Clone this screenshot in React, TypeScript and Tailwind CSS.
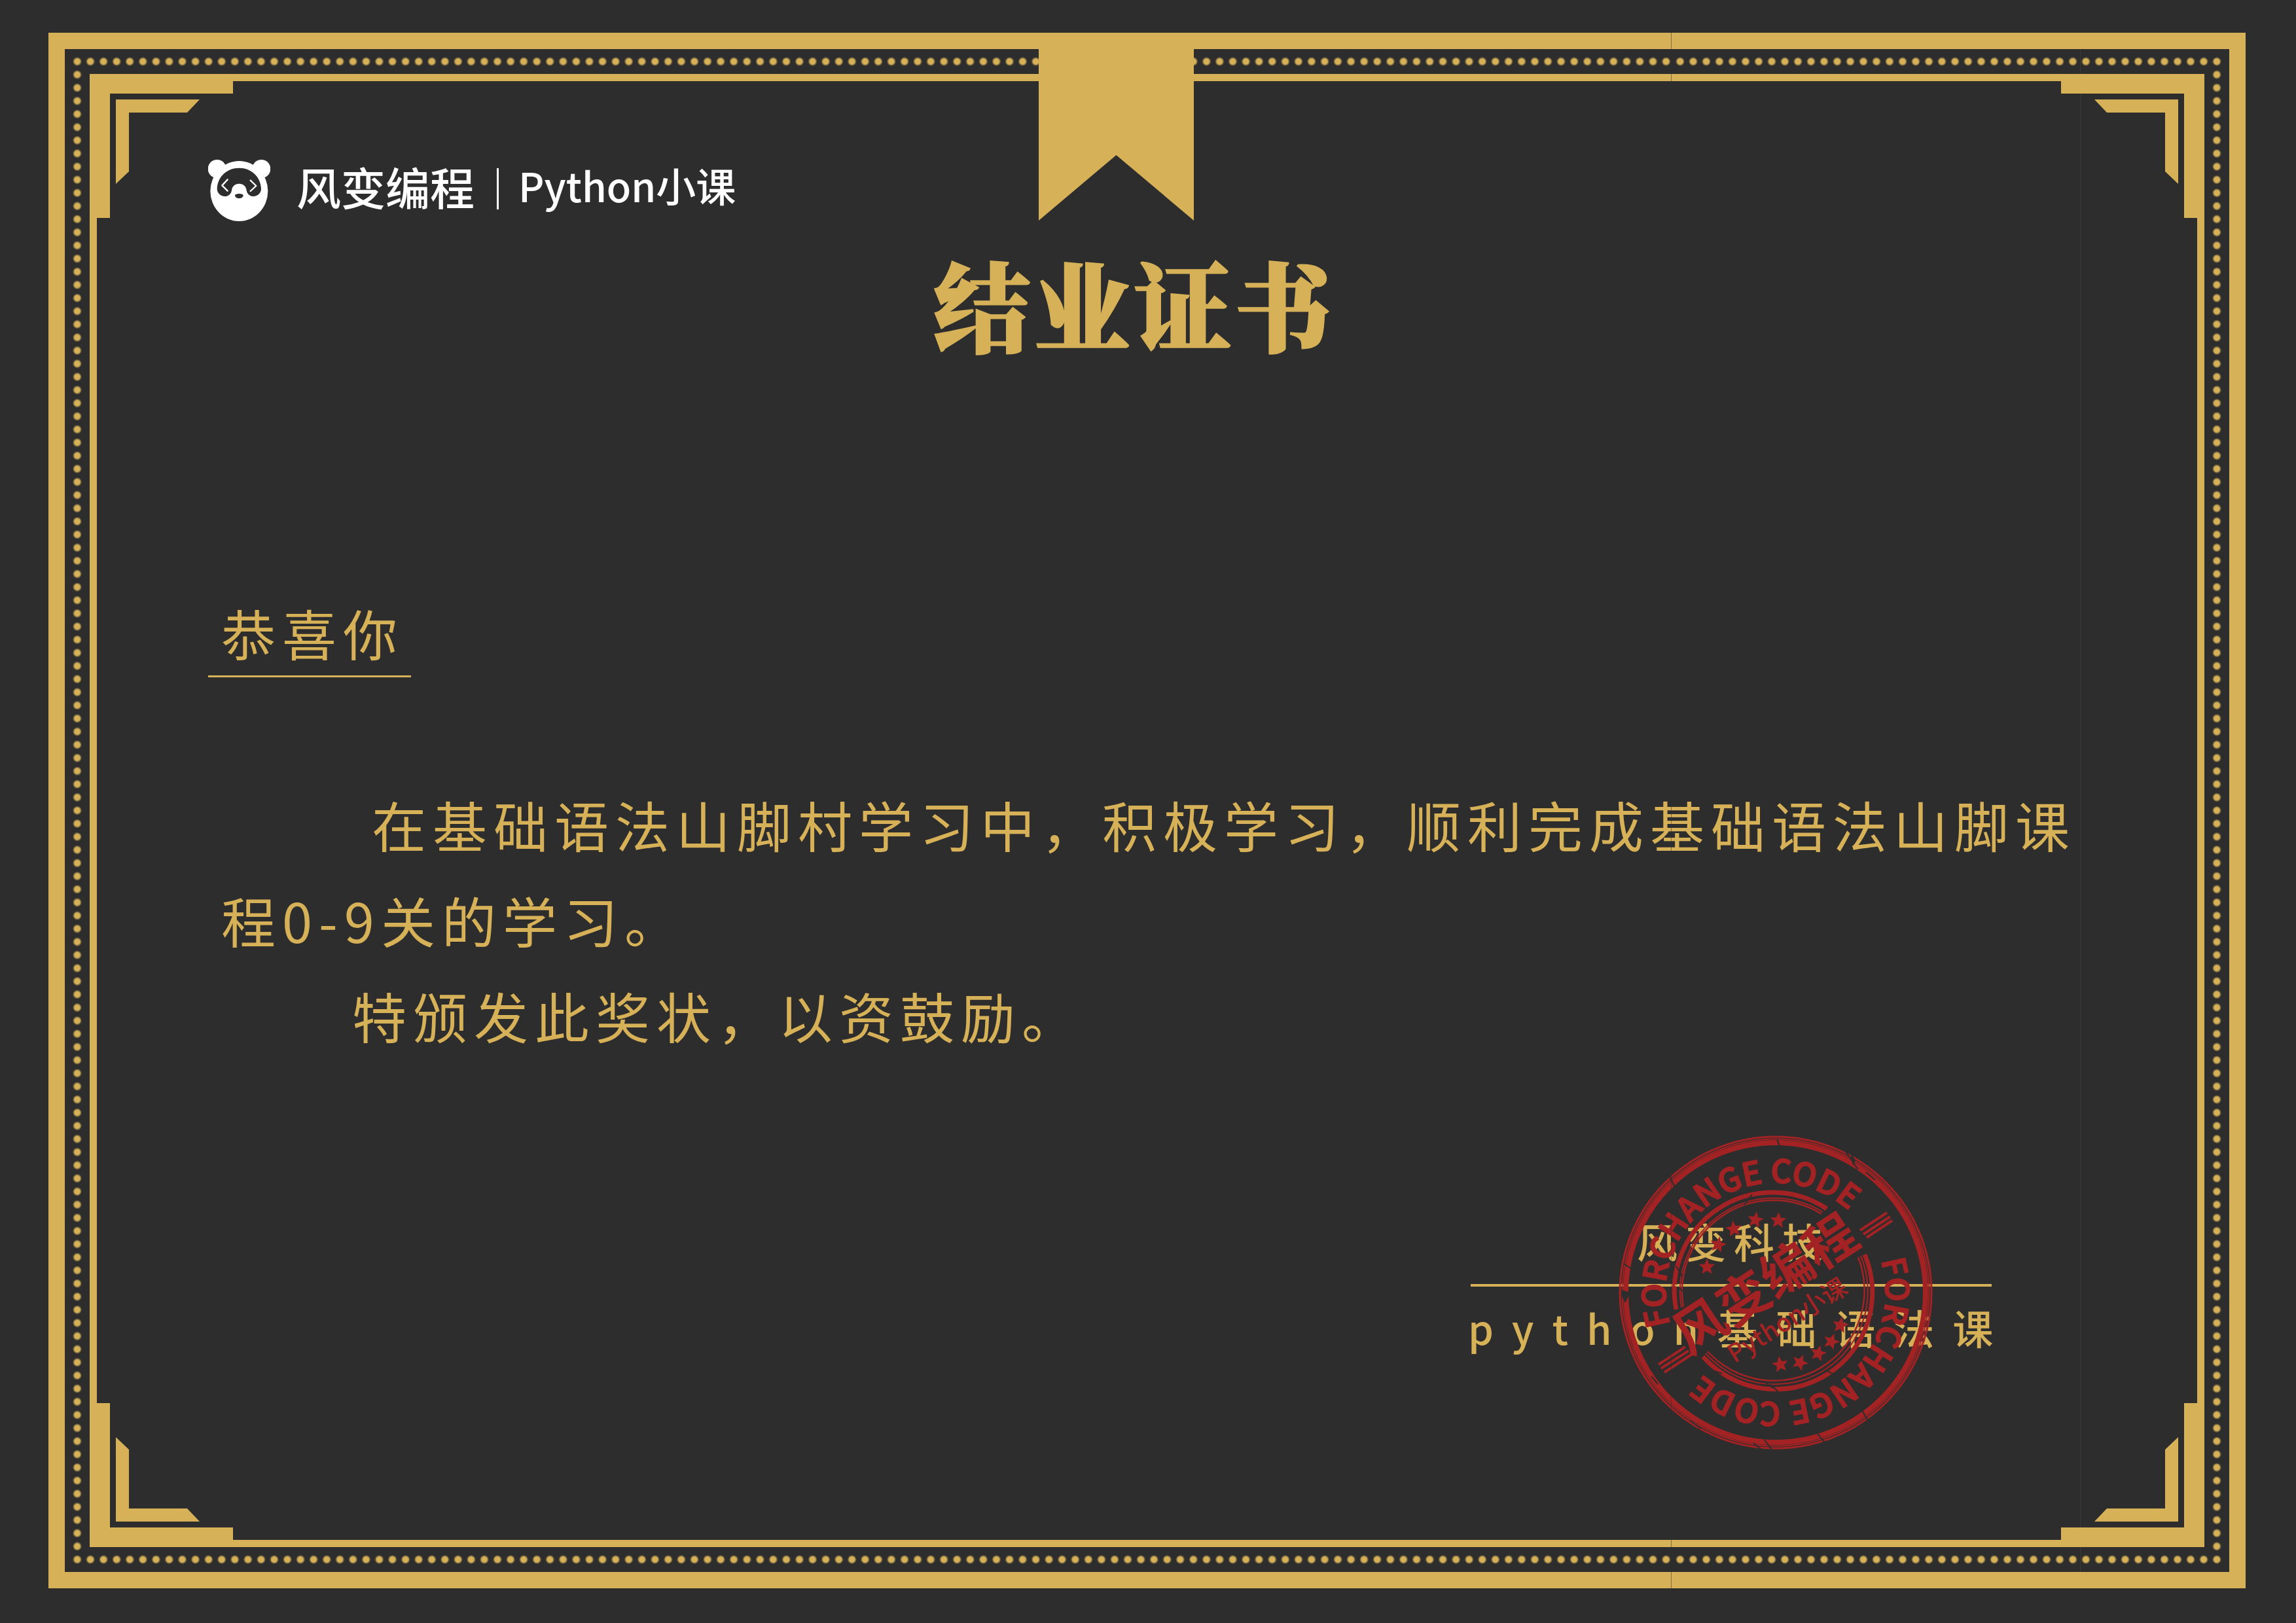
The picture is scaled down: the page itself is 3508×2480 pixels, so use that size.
import React from "react";

const GOLD = "#d6b158";
const RED = "#a32224";

function DotRow() {
  return (
    <div className="mx-[9px] grid grid-cols-[2448fr_840fr]">
      <div className="bg-[radial-gradient(circle,#d6b158_0_4px,transparent_7px)] bg-size-[20px_38px] [background-repeat:round_no-repeat]" />
      <div className="bg-[radial-gradient(circle,#d6b158_0_4px,transparent_7px)] bg-size-[20px_38px] [background-repeat:round_no-repeat]" />
    </div>
  );
}

function DotColumn() {
  return (
    <div className="-my-[9px] bg-[radial-gradient(circle,#d6b158_0_4px,transparent_7px)] bg-size-[38px_20px] [background-repeat:no-repeat_round]" />
  );
}

function Corner({ className }: { className: string }) {
  return (
    <svg viewBox="0 0 220 220" className={`absolute size-[220px] ${className}`} fill={GOLD} aria-hidden="true">
      <path d="M0 0H219V30H31V220H0Z" />
      <path d="M40 39H168L149 59H60V149L40 168Z" />
    </svg>
  );
}

function Panda() {
  return (
    <svg viewBox="54 72 285 282" className="h-[94px] w-[95px]" aria-hidden="true">
      <g fill="#fff">
        <circle cx="95" cy="114" r="42" />
        <circle cx="298" cy="114" r="42" />
        <ellipse cx="196" cy="216" rx="132" ry="138" />
      </g>
      <path
        fill="#2d2d2d"
        d="M95 205C97 150 140 110 196 110C252 110 295 150 297 205A35 35 0 0 1 262 240C245 240 232 228 230 212C228 193 214 182 196 182C178 182 164 193 162 212C160 228 147 240 130 240A35 35 0 0 1 95 205Z"
      />
      <path fill="#2d2d2d" d="M177 236C177 225 215 225 215 236C214 244 206 249 196 249C186 249 178 244 177 236Z" />
      <path
        d="M143 163L118 190L143 215M248 167L274 192L248 216"
        fill="none"
        stroke="#fff"
        strokeWidth="7"
        strokeLinecap="round"
        strokeLinejoin="round"
      />
    </svg>
  );
}

const STARS: [number, number, number][] = [
  [244, 130, 4],
  [209, 129, 10],
  [176, 143, -8],
  [152, 167, 12],
  [135, 201, 0],
  [247, 350, -10],
  [277, 347, 24],
  [305, 333, 14],
  [325, 315, 20],
  [339, 290, 10],
];

function Stamp() {
  return (
    <svg
      viewBox="0 0 480 480"
      className="pointer-events-none absolute -top-[95px] left-[226px] size-[480px]"
      role="img"
      aria-label="FORCHANGE CODE 风变编程 Python小课"
    >
      <defs>
        <path id="stamp-arc" d="M79.300 289.100A168 168 0 1 1 400.700 289.100" />
        <mask id="stamp-cracks" maskUnits="userSpaceOnUse" x="0" y="0" width="480" height="480">
          <rect width="480" height="480" fill="#fff" />
          <g stroke="#000" fill="none" strokeWidth="2">
            <path d="M242 6L247 18M345 22L366 52M378 56L392 68M78 62L86 80M8 196L20 204M427 120L436 132M372 420L381 436M304 456L316 470M222 464L234 480M206 470L218 480M50 368L60 380M110 436L126 448" />
            <path d="M192 106L204 90M88 200L98 216M86 228L98 238M232 380L246 394M222 376L236 386M316 358L330 366M140 358L158 364" />
          </g>
          <path d="M5 236L18 240L10 256L4 244Z" fill="#000" />
          <path d="M354 26L362 38L358 46Z" fill="#000" />
        </mask>
      </defs>

      <g mask="url(#stamp-cracks)" fill="none" stroke={RED}>
        <circle cx="240" cy="240" r="238" strokeWidth="3" />
        <circle cx="240" cy="240" r="234.500" strokeWidth="2" />
        <circle cx="240" cy="240" r="229" strokeWidth="8" />
        <path d="M318 112A150 150 0 0 0 88 266" strokeWidth="7" />
        <path d="M312 117A143 143 0 0 0 96 263" strokeWidth="2" />
        <path d="M310 120A139.500 139.500 0 0 0 99 262" strokeWidth="2.500" />
        <path d="M376 182A148 148 0 0 1 129 338" strokeWidth="7" />
        <path d="M370 184A142 142 0 0 1 133 333" strokeWidth="2" />
        <path d="M366 186A138 138 0 0 1 136 330" strokeWidth="2.500" />
      </g>

      <g stroke={RED} strokeWidth="4">
        <path d="M369 145L410 118M374 151L415 124M379 156L418 130" />
        <path d="M61 350L102 323M65 356L107 329M70 362L111 335" />
      </g>

      <g fill={RED}>
        {STARS.map(([x, y, turn]) => (
          <path
            key={`${x}-${y}`}
            transform={`translate(${x} ${y}) rotate(${turn})`}
            d="M0 -13L3.400 -4.600L12.400 -4L5.500 1.800L7.600 10.500L0 5.800L-7.600 10.500L-5.500 1.800L-12.400 -4L-3.400 -4.600Z"
          />
        ))}
      </g>

      <g fill={RED} className="font-['Noto_Sans_CJK_SC',sans-serif]">
        <g className="text-[49px] font-medium" stroke={RED} strokeWidth="2">
          <text>
            <textPath href="#stamp-arc">FORCHANGE CODE</textPath>
          </text>
          <text transform="rotate(180 240 240)">
            <textPath href="#stamp-arc">FORCHANGE CODE</textPath>
          </text>
        </g>
        <text
          transform="translate(221 222) rotate(-33)"
          textAnchor="middle"
          dominantBaseline="central"
          className="text-[79px] font-bold"
        >
          风变编程
        </text>
        <text
          transform="translate(256 280) rotate(-32)"
          textAnchor="middle"
          dominantBaseline="central"
          className="text-[38px] font-medium"
        >
          Python小课
        </text>
      </g>
    </svg>
  );
}

export default function App() {
  return (
    <main className="flex min-h-screen bg-[#2d2d2d] pt-[50px] pr-[77px] pb-[53px] pl-[74px] font-['Noto_Sans_CJK_SC',sans-serif] text-[#d6b158]">
      <article className="relative grid flex-1 grid-cols-[38px_1fr_38px] grid-rows-[38px_1fr_38px] border-[25px] border-[#d6b158]">
        <div className="col-span-3 grid">
          <DotRow />
        </div>
        <DotColumn />

        <section className="relative flex flex-col border-[11px] border-[#d6b158] pt-[120px] pr-[156px] pl-[170px]">
          <Corner className="-top-[11px] -left-[11px]" />
          <Corner className="-top-[11px] -right-[11px] -scale-x-100" />
          <Corner className="-bottom-[11px] -left-[11px] -scale-y-100" />
          <Corner className="-right-[11px] -bottom-[11px] -scale-100" />

          <header className="flex h-[94px] text-white">
            <Panda />
            <span className="ml-10 text-[68px] leading-[82px] font-medium">风变编程</span>
            <span className="mt-[13px] ml-[34px] h-[63px] w-[3px] bg-white" />
            <span className="ml-[30px] text-[61px] leading-[78px] font-medium">Python小课</span>
          </header>

          <h1 className="mt-[44px] pr-[54px] text-center font-['Noto_Serif_CJK_SC','Noto_Sans_CJK_SC',serif] text-[148px] leading-[160px] font-black tracking-[5px] [-webkit-text-stroke:3px_#d6b158]">
            结业证书
          </h1>

          <p className="mt-[363px] self-start border-b-[3px] border-[#d6b158] pr-[11px] pb-[5px] pl-5 text-[83px] leading-[122px] tracking-[10px]">
            恭喜你
          </p>

          <div className="mt-[151px] pl-5 text-[83px] leading-[146px] tracking-[10px]">
            <p className="indent-[230px]">在基础语法山脚村学习中，积极学习，顺利完成基础语法山脚课程0-9关的学习。</p>
            <p className="indent-[200px]">特颁发此奖状，以资鼓励。</p>
          </div>

          <footer className="relative mt-[206px] mr-[158px] w-[796px] self-end text-[62px] font-medium whitespace-nowrap">
            <p className="pl-2 text-center leading-[132px] tracking-[12px]">风变科技</p>
            <hr className="border-t-4 border-[#d6b158]" />
            <p className="-ml-1 leading-[124px] tracking-[28px]">python基础语法课</p>
            <Stamp />
          </footer>
        </section>

        <DotColumn />
        <div className="col-span-3 grid">
          <DotRow />
        </div>

        <svg
          viewBox="0 0 237 287"
          className="absolute -top-[25px] left-[45%] h-[287px] w-[237px]"
          fill={GOLD}
          aria-hidden="true"
        >
          <path d="M0 0H237V287L118.500 187L0 287Z" />
        </svg>
        <div className="absolute -top-[25px] -bottom-[25px] left-[74.2%] w-px bg-[#2d2d2d]/50" />
        <div className="absolute -top-[25px] -bottom-[25px] right-[227px] w-px bg-[#d6b158]/10" />
      </article>
    </main>
  );
}
